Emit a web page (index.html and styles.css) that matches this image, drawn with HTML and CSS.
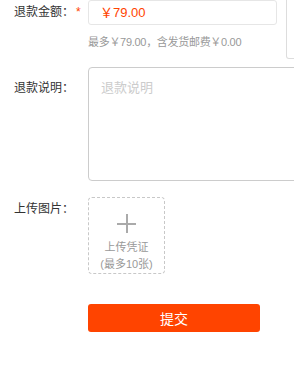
FILE: index.html
```html
<!doctype html>
<html lang="zh-CN">
<head>
  <meta charset="utf-8">
  <title>申请退款</title>
  <link rel="stylesheet" href="styles.css">
</head>
<body>
  <div class="refundForm">

    <div class="formRow amountRow">
      <div class="label">退款金额：<span class="star">*</span></div>
      <div class="amountCol">
        <div class="amountInput">￥79.00</div>
        <p class="hint">最多￥79.00，含发货邮费￥0.00</p>
      </div>
      <div class="sideBox"></div>
    </div>

    <div class="formRow descRow">
      <div class="label">退款说明：</div>
      <textarea class="descArea" placeholder="退款说明"></textarea>
    </div>

    <div class="formRow uploadRow">
      <div class="label">上传图片：</div>
      <div class="uploadBox">
        <span class="plus"></span>
        <span class="uploadText">上传凭证</span>
        <span class="uploadText">(最多10张)</span>
      </div>
    </div>

    <div class="formRow btnRow">
      <button class="submitBtn" type="button">提交</button>
    </div>

  </div>
</body>
</html>
```

FILE: styles.css
```css
body {
  margin: 0;
  background: #fff;
  color: #333;
  font-family: "Liberation Sans", "Noto Sans CJK SC", sans-serif;
  font-size: 12px;
  overflow: hidden;
}

.refundForm {
  width: 294px;
  overflow: hidden;
}

.formRow {
  display: flex;
  align-items: flex-start;
}

.label {
  width: 74px;
  flex-shrink: 0;
  padding-left: 14px;
  line-height: 25px;
  color: #333;
  white-space: nowrap;
}

.star {
  color: #f40;
  margin-left: 2px;
}

/* amount */
.amountCol {
  width: 189px;
  flex-shrink: 0;
}

.amountInput {
  box-sizing: border-box;
  height: 25px;
  line-height: 23px;
  padding-left: 11px;
  border: 1px solid #e6e6e6;
  border-radius: 3px;
  color: #f40;
  font-size: 13px;
}

.hint {
  margin: 9px 0 0;
  line-height: 17px;
  font-size: 11px;
  letter-spacing: -0.3px;
  color: #999;
  white-space: nowrap;
}

.sideBox {
  flex-shrink: 0;
  width: 100px;
  height: 58px;
  margin-left: 9px;
  border: 1px solid #ddd;
  border-top: none;
  border-radius: 0 0 0 3px;
}

/* description */
.descRow {
  margin-top: 8px;
}

.descRow .label {
  padding-top: 9px;
}

.descArea {
  flex-shrink: 0;
  box-sizing: border-box;
  width: 260px;
  height: 114px;
  margin: 0;
  padding: 11px 12px;
  border: 1px solid #ccc;
  border-radius: 4px;
  font-family: "Liberation Sans", "Noto Sans CJK SC", sans-serif;
  font-size: 13px;
  line-height: 18px;
  resize: none;
}

.descArea::placeholder {
  color: #ccc;
}

/* upload */
.uploadRow {
  margin-top: 16px;
}

.uploadRow .label {
  line-height: 24px;
}

.uploadBox {
  box-sizing: border-box;
  width: 77px;
  height: 77px;
  border: 1px dashed #c8c8c8;
  border-radius: 4px;
  display: flex;
  flex-direction: column;
  align-items: center;
  padding-top: 16px;
}

.plus {
  position: relative;
  width: 19px;
  height: 19px;
  margin-bottom: 6px;
}

.plus::before,
.plus::after {
  content: "";
  position: absolute;
  background: #aaa;
}

.plus::before {
  left: 0;
  right: 0;
  top: 9px;
  height: 2px;
}

.plus::after {
  top: 0;
  bottom: 0;
  left: 9px;
  width: 2px;
}

.uploadText {
  font-size: 11px;
  line-height: 17px;
  color: #999;
}

/* submit */
.btnRow {
  margin-top: 30px;
  padding-left: 88px;
}

.submitBtn {
  width: 172px;
  height: 28px;
  border: none;
  border-radius: 3px;
  background: #ff4400;
  color: #fff;
  font-family: "Liberation Sans", "Noto Sans CJK SC", sans-serif;
  font-size: 14px;
  cursor: pointer;
}
```
